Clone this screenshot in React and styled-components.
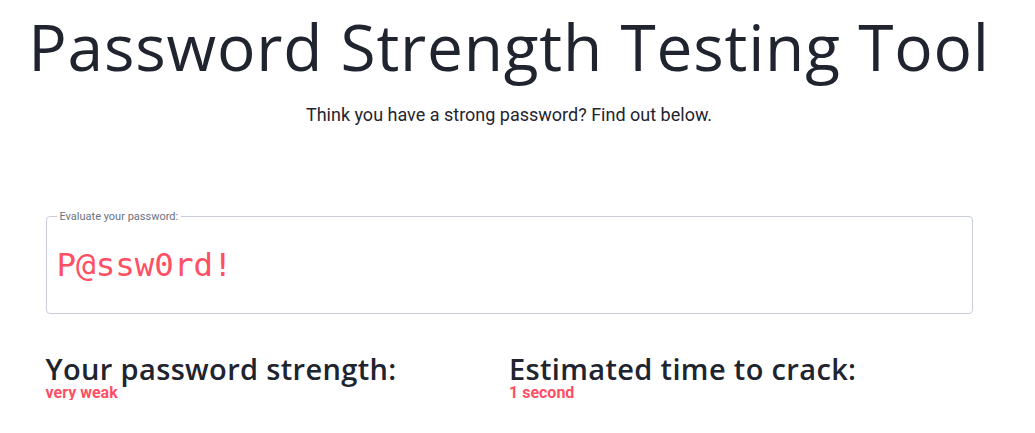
import React from "react";
import styled, { createGlobalStyle } from "styled-components";

const Global = createGlobalStyle`
  html, body { margin: 0; padding: 0; background: #ffffff; }
  body { font-family: Roboto, "Liberation Sans", sans-serif; color: #1f2430; }
`;

const Page = styled.div`
  width: 1018px;
  padding-top: 9px;
`;

const Container = styled.main`
  width: 927px;
  margin: 0 auto;
`;

const Header = styled.header`
  display: flex;
  flex-direction: column;
  align-items: center;
`;

const Title = styled.h1`
  margin: 0;
  font-family: "Open Sans", sans-serif;
  font-weight: 400;
  font-size: 64px;
  letter-spacing: 0.8px;
  line-height: 76px;
  color: #20242f;
  white-space: nowrap;
`;

const Subtitle = styled.p`
  margin: 19px 0 0;
  font-size: 18px;
  line-height: 22px;
  color: #1f2430;
`;

const Field = styled.fieldset`
  box-sizing: border-box;
  margin: 84px 0 0;
  padding: 0 10px;
  border: 1px solid #c9cdd9;
  border-radius: 4px;
  height: 104px;
  display: flex;
  align-items: center;
`;

const Legend = styled.legend`
  padding: 0 3px;
  font-size: 11px;
  color: #6b7280;
`;

const Input = styled.input`
  width: 100%;
  border: none;
  outline: none;
  background: transparent;
  padding: 0;
  margin-top: -7px;
  font-family: "DejaVu Sans Mono", monospace;
  font-size: 32.5px;
  color: #ff4f64;
`;

const Results = styled.section`
  display: grid;
  grid-template-columns: 1fr 1fr;
  margin-top: 40px;
`;

const Stat = styled.div`
  display: flex;
  flex-direction: column;
`;

const StatLabel = styled.h2`
  margin: 0;
  font-family: "Open Sans", sans-serif;
  font-weight: 600;
  font-size: 29px;
  letter-spacing: 0.35px;
  line-height: 29px;
  color: #20242f;
`;

const StatValue = styled.span`
  margin-top: 3px;
  font-size: 16px;
  font-weight: 700;
  line-height: 14px;
  color: #ff4f64;
`;

export default function App() {
  return (
    <Page>
      <Global />
      <Container>
        <Header>
          <Title>Password Strength Testing Tool</Title>
          <Subtitle>Think you have a strong password? Find out below.</Subtitle>
        </Header>
        <Field>
          <Legend>Evaluate your password:</Legend>
          <Input type="text" defaultValue="P@ssw0rd!" spellCheck={false} />
        </Field>
        <Results>
          <Stat>
            <StatLabel>Your password strength:</StatLabel>
            <StatValue>very weak</StatValue>
          </Stat>
          <Stat>
            <StatLabel>Estimated time to crack:</StatLabel>
            <StatValue>1 second</StatValue>
          </Stat>
        </Results>
      </Container>
    </Page>
  );
}
